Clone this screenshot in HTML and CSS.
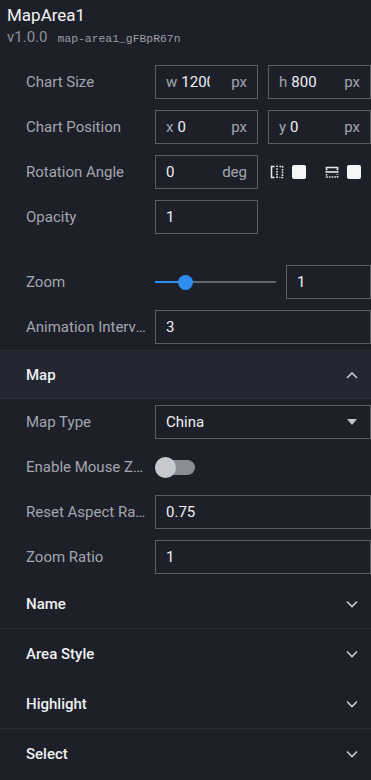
FILE: index.html
```html
<!DOCTYPE html>
<html lang="en">
<head>
    <meta charset="UTF-8">
    <meta name="viewport" content="width=device-width, initial-scale=1.0">
    <title>MapArea1</title>
    <link rel="stylesheet" href="styles.css">
</head>
<body>
    <div class="panel">
        <div class="header">
            <div class="title">MapArea1</div>
            <div class="meta"><span class="version">v1.0.0</span><span class="uid">map-area1_gFBpR67n</span></div>
        </div>

        <div class="fields">
            <div class="row">
                <div class="label">Chart Size</div>
                <div class="controls">
                    <div class="input half"><span class="prefix">w</span><span class="value short">1200</span><span class="unit">px</span></div>
                    <div class="input half"><span class="prefix">h</span><span class="value short">800</span><span class="unit">px</span></div>
                </div>
            </div>
            <div class="row">
                <div class="label">Chart Position</div>
                <div class="controls">
                    <div class="input half"><span class="prefix">x</span><span class="value short">0</span><span class="unit">px</span></div>
                    <div class="input half"><span class="prefix">y</span><span class="value short">0</span><span class="unit">px</span></div>
                </div>
            </div>
            <div class="row">
                <div class="label">Rotation Angle</div>
                <div class="controls">
                    <div class="input half"><span class="value">0</span><span class="unit">deg</span></div>
                    <div class="flips">
                        <div class="flip">
                            <svg width="14" height="14" viewBox="0 0 14 14" fill="none" stroke="#e6e7ea" stroke-width="1.6">
                                <path d="M4.5 1.5H1.5v11h3"/>
                                <path d="M7 0.5v13" stroke-dasharray="1.6 1.1"/>
                                <path d="M9.5 1.5h3v11h-3" stroke-dasharray="1.6 1.1"/>
                            </svg>
                            <span class="check"></span>
                        </div>
                        <div class="flip">
                            <svg width="14" height="14" viewBox="0 0 14 14" fill="none" stroke="#e6e7ea" stroke-width="1.6">
                                <path d="M1.5 5.5v-3h11v3"/>
                                <path d="M0.5 7h13"/>
                                <path d="M1.5 9v3h11V9" stroke-dasharray="1.6 1.1"/>
                            </svg>
                            <span class="check"></span>
                        </div>
                    </div>
                </div>
            </div>
            <div class="row">
                <div class="label">Opacity</div>
                <div class="controls">
                    <div class="input half"><span class="value">1</span></div>
                </div>
            </div>
            <div class="row zoom-row">
                <div class="label">Zoom</div>
                <div class="controls">
                    <div class="slider">
                        <div class="track"><div class="fill"></div></div>
                        <div class="thumb"></div>
                    </div>
                    <div class="input zoom-input"><span class="value">1</span></div>
                </div>
            </div>
            <div class="row">
                <div class="label">Animation Interval</div>
                <div class="controls">
                    <div class="input full"><span class="value">3</span></div>
                </div>
            </div>
        </div>

        <div class="section open">
            <div class="section-head">
                <span>Map</span>
                <svg class="chevron" width="12" height="8" viewBox="0 0 12 8" fill="none" stroke="#c9cbd0" stroke-width="1.6"><path d="M1 7l5-5 5 5"/></svg>
            </div>
            <div class="fields">
                <div class="row">
                    <div class="label">Map Type</div>
                    <div class="controls">
                        <div class="input full select"><span class="value">China</span><span class="caret"></span></div>
                    </div>
                </div>
                <div class="row">
                    <div class="label">Enable Mouse Zoom</div>
                    <div class="controls">
                        <div class="toggle"><div class="knob"></div></div>
                    </div>
                </div>
                <div class="row">
                    <div class="label">Reset Aspect Ratio</div>
                    <div class="controls">
                        <div class="input full"><span class="value">0.75</span></div>
                    </div>
                </div>
                <div class="row">
                    <div class="label">Zoom Ratio</div>
                    <div class="controls">
                        <div class="input full"><span class="value">1</span></div>
                    </div>
                </div>
            </div>
        </div>

        <div class="section plain">
            <div class="section-head">
                <span>Name</span>
                <svg class="chevron" width="12" height="8" viewBox="0 0 12 8" fill="none" stroke="#c9cbd0" stroke-width="1.6"><path d="M1 1.5l5 5 5-5"/></svg>
            </div>
        </div>
        <div class="section">
            <div class="section-head">
                <span>Area Style</span>
                <svg class="chevron" width="12" height="8" viewBox="0 0 12 8" fill="none" stroke="#c9cbd0" stroke-width="1.6"><path d="M1 1.5l5 5 5-5"/></svg>
            </div>
        </div>
        <div class="section plain">
            <div class="section-head">
                <span>Highlight</span>
                <svg class="chevron" width="12" height="8" viewBox="0 0 12 8" fill="none" stroke="#c9cbd0" stroke-width="1.6"><path d="M1 1.5l5 5 5-5"/></svg>
            </div>
        </div>
        <div class="section">
            <div class="section-head">
                <span>Select</span>
                <svg class="chevron" width="12" height="8" viewBox="0 0 12 8" fill="none" stroke="#c9cbd0" stroke-width="1.6"><path d="M1 1.5l5 5 5-5"/></svg>
            </div>
        </div>
    </div>
</body>
</html>
```

FILE: styles.css
```css
body {
    margin: 0;
    padding: 0;
    background-color: #1e2029;
    font-family: Roboto, "Liberation Sans", Arial, sans-serif;
    color: #e8e9ec;
    overflow: hidden;
}
.panel {
    width: 371px;
}
.header {
    padding: 4px 7px 0;
    height: 55px;
    box-sizing: border-box;
}
.title {
    font-size: 17px;
    line-height: 22px;
    color: #f2f3f5;
}
.meta {
    margin-top: 2px;
    display: flex;
    align-items: baseline;
    gap: 10px;
}
.version {
    font-size: 15px;
    color: #8d9099;
}
.uid {
    font-family: "Liberation Mono", "DejaVu Sans Mono", monospace;
    font-size: 11.4px;
    color: #9a9da5;
}
.fields {
    padding: 10px 0 6px;
    display: flex;
    flex-direction: column;
    gap: 11px;
}
.row {
    display: flex;
    align-items: center;
    height: 34px;
    padding-left: 26px;
}
.zoom-row {
    margin-top: 20px;
}
.label {
    width: 122px;
    margin-right: 8px;
    font-size: 15px;
    color: #a3a6ae;
    white-space: nowrap;
    overflow: hidden;
    text-overflow: ellipsis;
}
.controls {
    display: flex;
    align-items: center;
    gap: 10px;
    flex: none;
    width: 216px;
}
.input {
    height: 34px;
    box-sizing: border-box;
    border: 1px solid #5b5e67;
    display: flex;
    align-items: center;
    padding: 0 10px;
    font-size: 15px;
    flex: none;
}
.half {
    width: 103px;
}
.full {
    width: 216px;
}
.zoom-input {
    width: 85px;
}
.prefix {
    color: #a3a6ae;
    margin-right: 4px;
}
.value {
    color: #eef0f2;
    flex: 1;
    min-width: 0;
    overflow: hidden;
    white-space: nowrap;
}
.value.short {
    flex: none;
    width: 29px;
    margin-right: auto;
}
.unit {
    color: #a3a6ae;
    padding-left: 6px;
}
.flips {
    display: flex;
    gap: 19px;
    padding-left: 2px;
}
.flip {
    display: flex;
    align-items: center;
    gap: 8px;
}
.check {
    width: 14px;
    height: 14px;
    background: #f4f5f7;
    border-radius: 2px;
}
.slider {
    position: relative;
    width: 121px;
    height: 15px;
    display: flex;
    align-items: center;
    flex: none;
}
.track {
    width: 100%;
    height: 2px;
    background: #63666e;
}
.fill {
    width: 30px;
    height: 2px;
    background: #2f8ef0;
}
.thumb {
    position: absolute;
    left: 23px;
    top: 0;
    width: 15px;
    height: 15px;
    border-radius: 50%;
    background: #2f8ef0;
}
.section {
    border-top: 1px solid #2a2d37;
}
.section.plain {
    border-top-color: transparent;
}
.section-head {
    height: 49px;
    display: flex;
    align-items: center;
    justify-content: space-between;
    padding: 0 13px 0 26px;
    font-size: 15px;
    font-weight: 500;
    color: #eef0f2;
}
.open .section-head {
    height: 47px;
    background: #242732;
    border-bottom: 1px solid #2d303a;
}
.open .fields {
    padding-top: 6px;
    padding-bottom: 4px;
}
.select .caret {
    width: 0;
    height: 0;
    border-left: 5px solid transparent;
    border-right: 5px solid transparent;
    border-top: 6px solid #c4c6cb;
    margin-right: 3px;
}
.toggle {
    position: relative;
    width: 40px;
    height: 15px;
    border-radius: 8px;
    background: #8a8d94;
}
.knob {
    position: absolute;
    left: 0;
    top: -3px;
    width: 21px;
    height: 21px;
    border-radius: 50%;
    background: #c7c9cd;
}
```
